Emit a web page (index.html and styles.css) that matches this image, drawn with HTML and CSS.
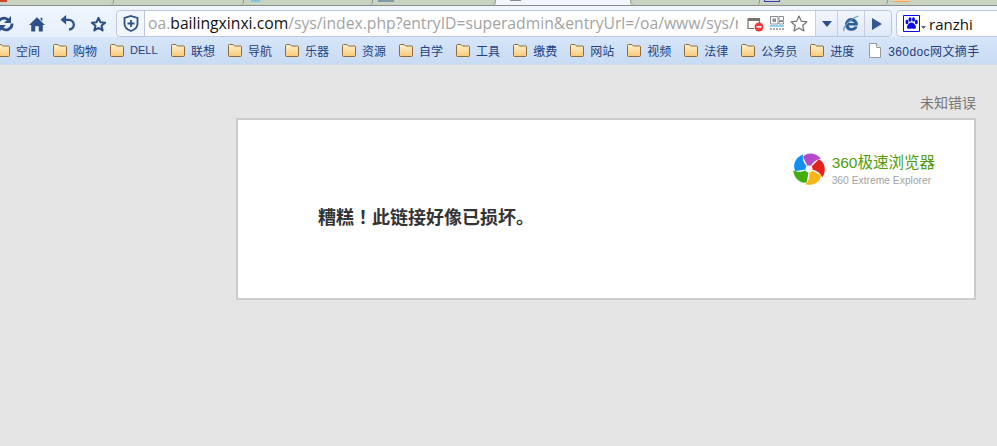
FILE: index.html
```html
<!DOCTYPE html>
<html lang="zh-CN">
<head>
<meta charset="utf-8">
<title>未知错误</title>
<link rel="stylesheet" href="styles.css">
</head>
<body>
<svg class="defs" width="0" height="0" aria-hidden="true">
  <defs>
    <linearGradient id="fold" x1="0" y1="0" x2="0" y2="1"><stop offset="0" stop-color="#fff3cf"/><stop offset="1" stop-color="#f8c878"/></linearGradient>
    <symbol id="folder" viewBox="0 0 16 14"><path d="M1.500 12.500V2.500Q1.500 1.500 2.500 1.500H6L7.500 3H13.500Q14.500 3 14.500 4V12.500Q14.500 13.500 13.500 13.500H2.500Q1.500 13.500 1.500 12.500Z" fill="url(#fold)" stroke="#8f6a3c"/></symbol>
  </defs>
</svg>
<header class="chrome">
  <div class="tabs">
    <div class="tab tab-a"><i class="fav fav-red"></i></div>
    <div class="tab tab-b"></div>
    <div class="tab tab-c"><i class="fav fav-sky"></i></div>
    <div class="tab tab-d"><i class="fav fav-steel"></i></div>
    <div class="tab-active"><i class="fav fav-gray"></i></div>
    <div class="tab tab-e tab-open"></div>
    <div class="tab tab-f"><i class="fav fav-box"></i></div>
    <div class="tab tab-g"><i class="fav fav-orange"></i></div>
  </div>
  <div class="toolbar">
    <div class="nav">
      <svg width="18" height="18" viewBox="0 0 18 18"><path d="M2 9.500a6 6 0 0 1 10-4.800M16 8.500a6 6 0 0 1-10 4.800" fill="none" stroke="#2d5088" stroke-width="2.800"/><path d="M15 1v7H8zM3 17v-7h7z" fill="#2d5088"/></svg>
      <svg width="16" height="16" viewBox="0 0 18 17"><path d="M9 1 18 9.500H15.500V17H11V11H7V17H2.500V9.500H0ZM13 1.500H15V5.500L13 3.500Z" fill="#2d5088"/></svg>
      <svg width="15" height="17" viewBox="0 0 16 18"><path d="M5 5H9.500A5 5 0 0 1 9.500 15.500" fill="none" stroke="#2d5088" stroke-width="2.400"/><path d="M6.500 0V10L0.500 5Z" fill="#2d5088"/></svg>
      <svg width="17" height="16" viewBox="0 0 18 17"><path d="M9 2 11 6.600 16 7.100 12.200 10.400 13.400 15.300 9 12.700 4.600 15.300 5.800 10.400 2 7.100 7 6.600Z" fill="#f4f8fe" stroke="#2d5088" stroke-width="2.200" stroke-linejoin="round"/></svg>
    </div>
    <div class="address">
      <div class="shield">
        <svg width="16" height="17" viewBox="0 0 16 17"><path d="M8 1 14.500 3V9Q14.500 13.500 8 16 1.500 13.500 1.500 9V3Z" fill="#f4f7fd" stroke="#2d4f86" stroke-width="1.800"/><path d="M8 5V12M4.500 8.500H11.500" stroke="#2d4f86" stroke-width="1.800"/></svg>
      </div>
      <div class="field">
        <div class="url"><span class="url-dim">oa.</span><span class="url-host">bailingxinxi.com</span><span class="url-dim">/sys/index.php?entryID=superadmin&amp;entryUrl=/oa/www/sys/r</span></div>
        <div class="field-icons">
          <svg width="17" height="16" viewBox="0 0 17 16"><path d="M1 2.500H12.500V9M7 12.500H1V2.500" fill="#fff" stroke="#77726e" stroke-width="1.200"/><path d="M1 3H12.500V5H1Z" fill="#77726e"/><circle cx="12" cy="11" r="4.500" fill="#ee3b3b"/><path d="M9.500 11H14.500" stroke="#fff" stroke-width="1.600"/></svg>
          <svg width="14" height="15" viewBox="0 0 14 15"><path d="M0.500 0.500H8V8H0.500ZM9 0.500H13.500V4.500H9ZM9 5.500H13.500V8H9Z" fill="#fff" stroke="#8b8f93"/><path d="M2.500 2.500H6V6H2.500Z" fill="#8b8f93"/><path d="M0 10H14" stroke="#43b4ea" stroke-width="1.200"/><path d="M0 13H14" stroke="#8b8f93" stroke-width="1.600" stroke-dasharray="2 1"/></svg>
          <svg width="18" height="17" viewBox="0 0 18 17"><path d="M9 1 11.300 6.200 17 6.800 12.700 10.500 14 16 9 13.100 4 16 5.300 10.500 1 6.800 6.700 6.200Z" fill="#fff" stroke="#77726e" stroke-width="1.200" stroke-linejoin="round"/></svg>
        </div>
      </div>
      <div class="addr-btn btn-drop"><svg width="10" height="6" viewBox="0 0 10 6"><path d="M0 0H10L5 6Z" fill="#2d4f86"/></svg></div>
      <div class="addr-btn btn-ie"><svg width="17" height="17" viewBox="0 0 17 17"><path d="M2 10A6.500 6.500 0 0 1 14.800 8V10.500H5.600A3 3 0 0 0 11.200 11.500H14.600A6.500 6.500 0 0 1 2 10ZM5.800 8H11.200A2.900 2.900 0 0 0 5.800 8Z" fill="#2b5f98"/><path d="M1 16C-0.500 13 6 4 15.500 1" fill="none" stroke="#6f9cc6" stroke-width="1.200"/></svg></div>
      <div class="addr-btn btn-play"><svg width="10" height="12" viewBox="0 0 10 12"><path d="M0 0 10 6 0 12Z" fill="#315a92"/></svg></div>
    </div>
    <div class="search">
      <svg width="17" height="17" viewBox="0 0 17 17"><path d="M0.500 0.500H16.500V16.500H0.500Z" fill="#fff" stroke="#0c0ce8"/><g fill="#0c0ce8"><ellipse cx="4" cy="7" rx="1.500" ry="2.200"/><ellipse cx="7" cy="4.500" rx="1.500" ry="2.200"/><ellipse cx="10.500" cy="4.500" rx="1.500" ry="2.200"/><ellipse cx="13.300" cy="7" rx="1.500" ry="2.200"/><path d="M8.500 7.500C11 7.500 13 10.500 13 12.500 13 14.500 10 13.500 8.500 13.500 7 13.500 4 14.500 4 12.500 4 10.500 6 7.500 8.500 7.500Z"/></g></svg>
      <svg class="caret" width="5" height="3" viewBox="0 0 5 3"><path d="M0 0H5L2.500 3Z" fill="#666"/></svg>
      <span class="search-text">ranzhi</span>
    </div>
  </div>
  <nav class="bookmarks">
    <a class="mark mark-first"><svg class="folder"><use href="#folder"/></svg>空间</a>
    <a class="mark"><svg class="folder"><use href="#folder"/></svg>购物</a>
    <a class="mark"><svg class="folder"><use href="#folder"/></svg><span class="mark-latin">DELL</span></a>
    <a class="mark"><svg class="folder"><use href="#folder"/></svg>联想</a>
    <a class="mark"><svg class="folder"><use href="#folder"/></svg>导航</a>
    <a class="mark"><svg class="folder"><use href="#folder"/></svg>乐器</a>
    <a class="mark"><svg class="folder"><use href="#folder"/></svg>资源</a>
    <a class="mark"><svg class="folder"><use href="#folder"/></svg>自学</a>
    <a class="mark"><svg class="folder"><use href="#folder"/></svg>工具</a>
    <a class="mark"><svg class="folder"><use href="#folder"/></svg>缴费</a>
    <a class="mark"><svg class="folder"><use href="#folder"/></svg>网站</a>
    <a class="mark"><svg class="folder"><use href="#folder"/></svg>视频</a>
    <a class="mark"><svg class="folder"><use href="#folder"/></svg>法律</a>
    <a class="mark"><svg class="folder"><use href="#folder"/></svg>公务员</a>
    <a class="mark"><svg class="folder"><use href="#folder"/></svg>进度</a>
    <a class="mark mark-doc"><svg class="doc" width="12" height="15" viewBox="0 0 12 15"><path d="M0.500 0.500H7.500L11.500 4.500V14.500H0.500Z" fill="#fff" stroke="#9a9a9a"/><path d="M7.500 0.500V4.500H11.500" fill="#eee" stroke="#9a9a9a"/></svg>360doc网文摘手</a>
  </nav>
</header>
<main class="page">
  <p class="status">未知错误</p>
  <section class="card">
    <div class="brand">
      <svg class="brand-logo" width="34" height="34" viewBox="-17 -17 34 34">
        <path d="M0 0-6-12C-3-17 7-17 12-10 7-10 3-6 0 0Z" fill="#b44ac8"/>
        <path transform="rotate(72)" d="M0 0-6-12C-3-17 7-17 12-10 7-10 3-6 0 0Z" fill="#e0241c"/>
        <path transform="rotate(144)" d="M0 0-6-12C-3-17 7-17 12-10 7-10 3-6 0 0Z" fill="#fbb41a"/>
        <path transform="rotate(216)" d="M0 0-6-12C-3-17 7-17 12-10 7-10 3-6 0 0Z" fill="#42ad0e"/>
        <path transform="rotate(288)" d="M0 0-6-12C-3-17 7-17 12-10 7-10 3-6 0 0Z" fill="#0f8ff0"/>
        <circle r="3.500" fill="#fff"/>
      </svg>
      <div class="brand-text">
        <div class="brand-name">360极速浏览器</div>
        <div class="brand-sub">360 Extreme Explorer</div>
      </div>
    </div>
    <h1 class="message">糟糕<span lang="ja">！</span>此链接好像已损坏。</h1>
  </section>
</main>
</body>
</html>
```
FILE: styles.css
```css
* { box-sizing: border-box; }
html, body { margin: 0; height: 100%; overflow: hidden; }
body {
  background: #e5e5e5;
  font-family: "Liberation Sans", "Noto Sans CJK SC", sans-serif;
}
.defs { display: block; height: 0; }

.tabs {
  display: flex;
  height: 6px;
  background: #c9d3c1;
  border-bottom: 1px solid #8a8d8a;
  overflow: hidden;
}
.tab {
  position: relative;
  height: 5px;
  border-right: 1px solid #8e9a8e;
  border-bottom-right-radius: 4px;
  overflow: hidden;
}
.tab-a { width: 114px; }
.tab-b { width: 130px; }
.tab-c { width: 129px; }
.tab-d { width: 123px; border-bottom-right-radius: 6px; }
.tab-e { width: 130px; }
.tab-f { width: 128px; }
.tab-g { flex: 1; border-right: 0; }
.tab-open { border-bottom-left-radius: 6px; border-left: 1px solid #8e9a8e; }
.tab-active {
  position: relative;
  width: 134px;
  height: 6px;
  margin-bottom: -1px;
  background: #f1f6fe;
}
.fav { position: absolute; top: 0; display: block; }
.fav-red { left: 0; width: 7px; height: 2px; background: #d0452c; }
.fav-sky { left: 7px; width: 9px; height: 2px; background: #7cc6e8; }
.fav-steel { left: 5px; width: 16px; height: 2px; background: #7e9aa8; }
.fav-gray { left: 14px; width: 11px; height: 1px; background: #8c8c8c; }
.fav-box { left: 4px; width: 16px; height: 2px; border: 1px solid #3c3cc0; border-top: 0; }
.fav-orange { left: 5px; width: 16px; height: 2px; background: linear-gradient(#f6e9c8, #f08a2c); }

.toolbar {
  display: flex;
  align-items: center;
  height: 31px;
  padding: 4px 0 0 0;
  background: linear-gradient(#f0f6fe, #e6effb);
}
.nav {
  display: flex;
  align-items: center;
  width: 116px;
  flex: none;
  margin-left: -4px;
  gap: 15px;
}
.nav svg { flex: none; }
.address {
  display: flex;
  width: 776px;
  height: 27px;
  margin-left: 4px;
  flex: none;
  border: 1px solid #bcc6dc;
  border-radius: 4px;
  background: #e7effb;
}
.shield {
  display: flex;
  align-items: center;
  justify-content: center;
  width: 28px;
  flex: none;
  border-right: 1px solid #bcc6dc;
  background: #f1f6fd;
  border-radius: 4px 0 0 4px;
}
.field {
  display: flex;
  align-items: center;
  width: 670px;
  flex: none;
  padding-left: 3px;
  background: #fff;
}
.url {
  width: 590px;
  flex: none;
  overflow: hidden;
  white-space: nowrap;
  font-family: "Open Sans", "Noto Sans", sans-serif;
  font-size: 15.700px;
  line-height: 25px;
}
.url-dim { color: #a3a3a3; }
.url-host { color: #111; }
.field-icons {
  display: flex;
  align-items: center;
  gap: 6px;
  margin-left: 9px;
}
.addr-btn {
  display: flex;
  align-items: center;
  justify-content: center;
  flex: none;
  height: 25px;
  border-left: 1px solid #c4cfe2;
  background: linear-gradient(#f2f6fd, #dfe8f7);
}
.btn-drop { width: 22px; }
.btn-ie { width: 27px; }
.btn-play { flex: 1; padding-right: 2px; border-radius: 0 4px 4px 0; }
.search {
  display: flex;
  align-items: center;
  flex: 1;
  height: 27px;
  margin-left: 4px;
  padding-left: 6px;
  border: 1px solid #bcc6dc;
  border-right: 0;
  border-radius: 5px 0 0 5px;
  background: #fff;
}
.caret { margin: 8px 3px 0 1px; }
.search-text {
  font-family: "Open Sans", "Noto Sans", sans-serif;
  font-size: 15px;
  color: #111;
}

.bookmarks {
  display: flex;
  align-items: center;
  height: 28px;
  padding-bottom: 1px;
  background: linear-gradient(#d6e5f8, #c9dbf3);
  border-bottom: 1px solid #d3dbe6;
  white-space: nowrap;
}
.mark {
  display: flex;
  align-items: center;
  flex: none;
  margin-right: 12px;
  font-size: 12px;
  color: #23407f;
}
.mark-first { margin-left: -5px; }
.mark-latin { width: 28px; font-size: 11px; }
.folder { width: 16px; height: 14px; margin-right: 5px; flex: none; }
.doc { margin-right: 7px; flex: none; }
.mark-doc { margin-left: 3px; letter-spacing: 0.400px; }

.page {
  padding: 29px 21px 0 236px;
}
.status {
  margin: 0 0 5px;
  text-align: right;
  font-size: 14px;
  line-height: 19px;
  color: #777;
}
.card {
  height: 182px;
  padding: 32px 39px 0 80px;
  background: #fff;
  border: 2px solid #cccccc;
}
.brand {
  display: flex;
  align-items: flex-start;
  justify-content: flex-end;
  gap: 6px;
}
.brand-name {
  font-size: 15.500px;
  line-height: 22px;
  color: #4f9d0b;
}
.brand-sub {
  font-size: 10.300px;
  line-height: 14px;
  color: #a2a2a2;
}
.message {
  margin: 15px 0 0;
  font-family: "Noto Sans CJK JP", "Noto Sans CJK SC", sans-serif;
  font-size: 18px;
  line-height: 26px;
  font-weight: 700;
  color: #333;
}
```
